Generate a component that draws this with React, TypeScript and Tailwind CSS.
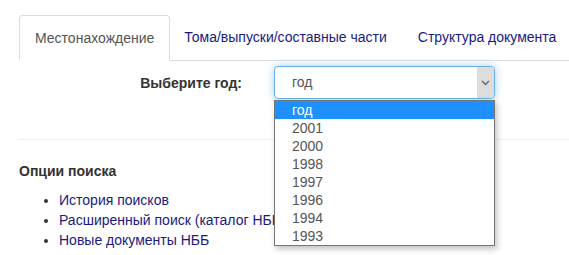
const years = ["год", "2001", "2000", "1998", "1997", "1996", "1994", "1993"];

function Tabs() {
  return (
    <ul className="flex whitespace-nowrap border-b border-[#ddd]">
      <li className="-mb-px shrink-0 rounded-t-[4px] border border-[#ddd] border-b-transparent bg-white px-[15px] py-[12px] leading-5 text-[#555]">
        Местонахождение
      </li>
      <li className="shrink-0 px-[14px] py-[12px] leading-5 text-[#1a1a80]">
        Тома/выпуски/составные части
      </li>
      <li className="shrink-0 px-[17px] py-[12px] leading-5 text-[#1a1a80]">
        Структура документа
      </li>
    </ul>
  );
}

function YearSelect() {
  return (
    <div className="relative">
      <div className="flex h-[33px] w-[221px] items-stretch overflow-hidden rounded-[4px] border border-[#66afe9] bg-white shadow-[0_0_8px_rgba(102,175,233,0.6)]">
        <span className="flex-1 pl-[17px] leading-[31px] text-[#555]">год</span>
        <span className="flex w-[17px] items-center justify-center bg-[#ddd]">
          <svg width="9" height="6" viewBox="0 0 9 6" fill="none">
            <path d="M1 1l3.5 3.5L8 1" stroke="#666" strokeWidth="1.4" />
          </svg>
        </span>
      </div>
      <ul className="absolute left-0 top-[34px] z-10 w-[221px] border border-[#767676] bg-white shadow-[2px_3px_6px_rgba(0,0,0,0.25)]">
        {years.map((y, i) => (
          <li
            key={y}
            className={
              i === 0
                ? "h-[18px] bg-[#1e90ff] pl-[17px] leading-[18px] text-white"
                : "h-[18px] pl-[17px] leading-[18px] text-[#555]"
            }
          >
            {y}
          </li>
        ))}
      </ul>
    </div>
  );
}

export default function App() {
  return (
    <div className="h-[255px] overflow-hidden bg-white pl-[19px] pt-[15px] text-[14px] text-[#333] [font-family:'Liberation_Sans',Arial,sans-serif]">
      <Tabs />
      <div className="mt-[5px] flex items-center">
        <label className="w-[255px] pr-[32px] text-right font-bold leading-5 text-[#333]">
          Выберите год:
        </label>
        <YearSelect />
      </div>
      <div className="mt-[40px] border-t border-[#eee]" />
      <h3 className="mt-[21px] font-bold leading-5 text-[#333]">Опции поиска</h3>
      <ul className="mt-[9px] list-disc pl-[40px] leading-5 text-[#1a1a80] marker:text-[#333]">
        <li>История поисков</li>
        <li>Расширенный поиск (каталог НББ)</li>
        <li>Новые документы НББ</li>
      </ul>
    </div>
  );
}
